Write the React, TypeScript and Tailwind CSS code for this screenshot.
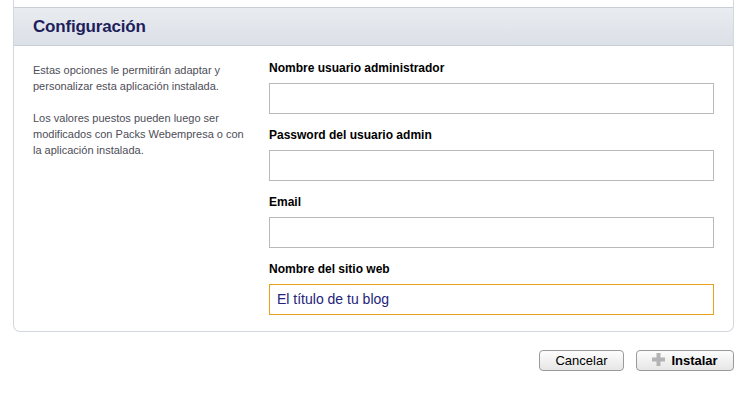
const fields = [
  { label: "Nombre usuario administrador", value: "" },
  { label: "Password del usuario admin", value: "" },
  { label: "Email", value: "" },
  { label: "Nombre del sitio web", value: "El título de tu blog", focus: true },
];

const App = () => {
  return (
    <div className="w-[753px] h-[407px] bg-white font-['Liberation_Sans',Arial,sans-serif]">
      <div className="ml-[13px] w-[721px] pt-[7px] border-x border-b border-[#d3d7de] rounded-b-[7px]">
        <div className="h-[39px] border-y border-[#c9cdd5] bg-gradient-to-b from-[#e9ecf0] to-[#dce0e7] flex items-center px-[19px]">
          <h1 className="text-[17px] font-bold text-[#1e1e5c] tracking-[-0.2px]">Configuración</h1>
        </div>

        <div className="flex pb-[16px]">
          <div className="w-[255px] pl-[19px] pt-[16px] text-[11px] leading-[16px] text-[#4d4d57]">
            <p>
              Estas opciones le permitirán adaptar y<br />
              personalizar esta aplicación instalada.
            </p>
            <p className="mt-[16px]">
              Los valores puestos pueden luego ser<br />
              modificados con Packs Webempresa o con<br />
              la aplicación instalada.
            </p>
          </div>

          <div className="w-[445px] pt-[14px] flex flex-col gap-[13px]">
            {fields.map((f) => (
              <div key={f.label}>
                <label className="block text-[12px] leading-[16px] font-bold text-black mb-[7px]">
                  {f.label}
                </label>
                <div
                  className={
                    f.focus
                      ? "h-[31px] border border-[#e9a11c] bg-white flex items-center px-[7px] text-[14px] text-[#24247a]"
                      : "h-[31px] border border-[#b9b9b9] bg-white"
                  }
                >
                  {f.value}
                </div>
              </div>
            ))}
          </div>
        </div>
      </div>

      <div className="w-[734px] flex justify-end gap-[12px] mt-[18px]">
        <button className="w-[85px] h-[21px] rounded-[4px] border border-[#9a9a9a] bg-gradient-to-b from-[#fdfdfd] to-[#e6e6e6] text-[13px] text-black leading-none">
          Cancelar
        </button>
        <button className="w-[98px] h-[21px] rounded-[4px] border border-[#9a9a9a] bg-gradient-to-b from-[#fdfdfd] to-[#e6e6e6] text-[13px] font-bold text-black leading-none flex items-center justify-center gap-[6px]">
          <svg width="13" height="13" viewBox="0 0 13 13" className="-mt-[2px]">
            <rect x="4.5" y="0" width="4" height="13" fill="#b3b3b3" />
            <rect x="0" y="4.5" width="13" height="4" fill="#b3b3b3" />
          </svg>
          Instalar
        </button>
      </div>
    </div>
  );
};

export default App;
